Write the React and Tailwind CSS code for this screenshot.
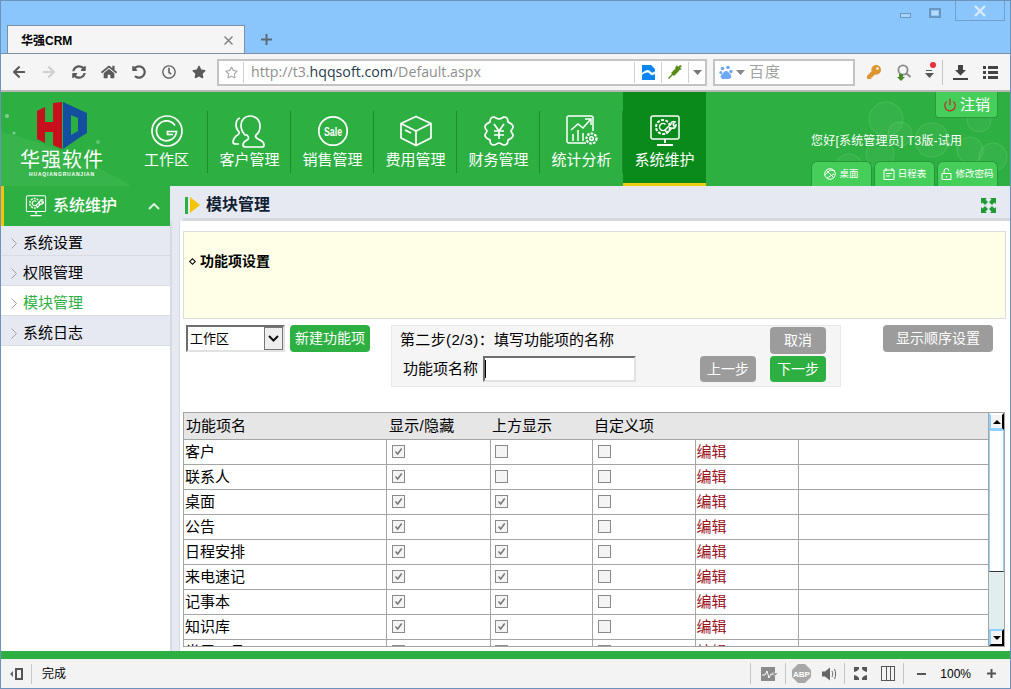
import React from "react";
import {
  FaArrowLeft, FaArrowRight, FaSyncAlt, FaHome, FaUndoAlt, FaRegClock, FaStar, FaRegStar, FaKey,
} from "react-icons/fa";
import { Power } from "lucide-react";

const cjk = { fontFamily: '"Liberation Sans","Noto Sans CJK SC",sans-serif' };

const Caret = ({ color = "#555" }) => (
  <svg width="9" height="5" viewBox="0 0 9 5"><path d="M0 0h9L4.500 5z" fill={color} /></svg>
);

const IconG = () => (
  <svg width="36" height="32" viewBox="0 0 36 32" fill="none" stroke="#fff" strokeWidth="1.700">
    <circle cx="18" cy="16" r="15" />
    <path d="M26 10.500a10 10 0 1 0 1.500 6H18.500v3h5.500" />
  </svg>
);
const IconUser = () => (
  <svg width="36" height="34" viewBox="0 0 36 34" fill="none" stroke="#fff" strokeWidth="1.700" strokeLinejoin="round">
    <path d="M13 21c-3-3-4-6-4-10 0-5 4-9 9-9 0 0 10 0 10 10 0 4-1 7-4 9-1 2 0 3 2 4 4 2 6 3 6 6 0 1-1 2-2 2H14c-2 0-3-1-3-2 0-3 2-4 4-5 2-1 2-3 0-5z" />
    <path d="M8 4C5 5 4 8 4 11c0 3 1 5 3 7 1 2-1 3-3 4-2 2-3 4-3 6 0 1 1 2 3 2h3" />
  </svg>
);
const IconSale = () => (
  <svg width="32" height="32" viewBox="0 0 32 32" fill="none">
    <circle cx="16" cy="16" r="14.200" stroke="#fff" strokeWidth="1.700" />
    <text x="16" y="20.500" textAnchor="middle" fontSize="12" fontWeight="700" fill="#fff" fontFamily="Liberation Sans Narrow, Liberation Sans, sans-serif" textLength="18" lengthAdjust="spacingAndGlyphs">Sale</text>
  </svg>
);
const IconBox = () => (
  <svg width="32" height="32" viewBox="0 0 32 32" fill="none" stroke="#fff" strokeWidth="1.700" strokeLinejoin="round">
    <path d="M16 1.500 31 8.500V23L16 30.500 1 23V8.500z" />
    <path d="M1 8.500 16 16l15-7.500M16 16v14.500M5 15l6 3" />
  </svg>
);
const IconYen = () => (
  <svg width="32" height="32" viewBox="0 0 32 32" fill="none" stroke="#fff" strokeWidth="1.700" strokeLinejoin="round">
    <path d="M11 2c2 1 3 2 5 2s3-1 5-2c3 0 4 2 4 5 2 1 5 2 5 5 0 2-2 3-2 4s2 3 2 4c0 3-3 4-5 5 0 3-1 5-4 5-2 0-3-2-5-2s-3 2-5 2c-3 0-4-2-4-5-2-1-5-2-5-5 0-1 2-3 2-4s-2-2-2-4c0-3 3-4 5-5 0-3 1-5 4-5z" />
    <path d="m11 9 5 7 5-7M11 16h10M11 20h10M16 16v8" />
  </svg>
);
const IconStat = () => (
  <svg width="32" height="32" viewBox="0 0 32 32" fill="none" stroke="#fff" strokeWidth="1.500">
    <path d="M20 28H3c-1 0-2-1-2-2V3c0-1 1-2 2-2h22c1 0 2 1 2 2v13" />
    <path d="m5 15 7-6 5 4 7-8M19 4h6v6" />
    <path d="M7 26v-7M12 26V15M17 26v-8" />
    <circle cx="25.500" cy="23.500" r="5" strokeDasharray="2.500 1.200" strokeWidth="2.200" /><circle cx="25.500" cy="23.500" r="1.800" />
  </svg>
);
const IconSys = ({ w = 32 }) => (
  <svg width={w} height={w} viewBox="0 0 32 32" fill="none" stroke="#fff" strokeWidth="1.500">
    <rect x="2" y="1" width="28" height="23" rx="2" />
    <path d="M16 24v4M8 30h16" strokeWidth="2" />
    <circle cx="14" cy="12" r="7" strokeDasharray="3 1.400" strokeWidth="2" />
    <path d="M16.500 9.500a3.500 3.500 0 1 0 0 5M16 15l6-6c0-2 2-3 4-2l-2 2 1 2 2-1c0 2-2 4-4 3l-5 5z" />
  </svg>
);

const NAV = [
  ["工作区", IconG],
  ["客户管理", IconUser],
  ["销售管理", IconSale],
  ["费用管理", IconBox],
  ["财务管理", IconYen],
  ["统计分析", IconStat],
];

const ROWS = [
  ["客户", false],
  ["联系人", false],
  ["桌面", true],
  ["公告", true],
  ["日程安排", true],
  ["来电速记", true],
  ["记事本", true],
  ["知识库", true],
  ["常用工具", true],
];

const Check = ({ on }) => (
  <span className="block w-[13px] h-[13px] border border-[#8a8a8a] bg-[#f4f4f4]">
    {on && (
      <svg width="11" height="11" viewBox="0 0 11 11" fill="none" stroke="#777" strokeWidth="1.500" className="block">
        <path d="m2.500 5.500 2.200 2.500 4-5.500" />
      </svg>
    )}
  </span>
);

const GrayBtn = ({ children, cls }) => (
  <div className={`flex items-center justify-center rounded-[4px] bg-[#9c9c9c] text-white text-[14px] ${cls}`}>{children}</div>
);

const Divider = () => <span className="block w-px h-[21px] bg-[#c5c5c5]" />;

function Chrome() {
  return (
    <>
      <div className="h-[52px] bg-[#8ac6fb] flex shrink-0 relative">
        <div className="mt-[24px] ml-[6px] w-[238px] h-[28px] bg-[#f5f5f5] border-t border-x border-[#7d90a3] flex items-center pl-[13px] pr-[11px] pt-[2px] text-[12px] font-bold text-black">
          <span className="flex-1">华强CRM</span>
          <svg width="9" height="9" viewBox="0 0 9 9" stroke="#777" strokeWidth="1.200"><path d="m.5.5 8 8m0-8-8 8" /></svg>
        </div>
        <svg width="11" height="11" viewBox="0 0 11 11" stroke="#5d6b78" strokeWidth="2" className="mt-[33px] ml-[16px]"><path d="M5.500 0v11M0 5.500h11" /></svg>
        <div className="ml-auto flex items-start pr-[5px]">
          <span className="mt-[12px] w-[11px] h-[5px] border border-[#6a97bf] bg-[#a8d4fb]" />
          <span className="mt-[7px] ml-[18px] w-[12px] h-[10px] border-2 border-[#6a97bf] flex items-center justify-center"><span className="w-[6px] h-[4px] bg-[#b9dcfb]" /></span>
          <span className="ml-[14px] w-[50px] h-[20px] border border-t-0 border-[#6f9fca] flex items-center justify-center">
            <svg width="12" height="12" viewBox="0 0 12 12" stroke="#d7eafb" strokeWidth="2.400"><path d="m1 1 10 10m0-10L1 11" /></svg>
          </span>
        </div>
      </div>
      <div className="h-[39px] shrink-0 bg-[#f5f5f5] border-t border-[#7d90a3] border-b-2 border-b-[#b8b8b8] flex items-center">
        <div className="flex items-center text-[#5a5a5a] w-[216px] pl-[3px]">
          {[FaArrowLeft, FaArrowRight, FaSyncAlt, FaHome, FaUndoAlt, FaRegClock, FaStar].map((I, i) => (
            <span key={i} className={`w-[30px] flex justify-center ${i === 1 ? "text-[#cfcfcf]" : ""}`}><I size={i === 3 ? 16 : 14} /></span>
          ))}
        </div>
        <div className="w-[490px] h-[27px] bg-white border-2 border-[#c4c4c4] flex items-center text-[14.200px] text-[#8e8e8e]" style={{ fontFamily: '"Open Sans","Noto Sans CJK SC",sans-serif' }}>
          <span className="w-[25px] flex justify-center text-[#a5a5a5] border-r border-[#d0d0d0] h-[21px] items-center shrink-0"><FaRegStar size={13} /></span>
          <span className="ml-[7px] flex-1">http://t3.<span className="text-[#2a3b4d]">hqqsoft.com</span>/Default.aspx</span>
          <span className="w-[27px] h-[21px] border-l border-[#d0d0d0] flex items-center justify-center">
            <svg width="13" height="15" viewBox="0 0 13 15"><path d="M0 0h9l4 4v2c-2 2-3 2-5 0s-4-1-8 2zM0 10c4-3 6-3 8-1s3 1 5 0v6H0z" fill="#0b86f0" /></svg>
          </span>
          <span className="w-[27px] h-[21px] border-l border-[#d0d0d0] flex items-center justify-center">
            <svg width="14" height="14" viewBox="0 0 14 14" fill="#5a8a18"><path d="m0 13 4-4-1-1 5-5 3 3-5 5-1-1-4 4zM9 0l1 2 2-2 2 1-2 2 2 1-4 2-3-3z" /></svg>
          </span>
          <span className="w-[17px] h-[21px] border-l border-[#d0d0d0] flex items-center justify-center"><Caret color="#777" /></span>
        </div>
        <div className="ml-[6px] w-[142px] h-[27px] bg-white border-2 border-[#c4c4c4] flex items-center pl-[4px] text-[15px] text-[#a2a2a2] tracking-[1px]">
          <svg width="14" height="15" viewBox="0 0 14 15" fill="#6ea7f5"><circle cx="3.500" cy="3.500" r="1.800" /><circle cx="9" cy="2.500" r="1.800" /><circle cx="1.800" cy="7.500" r="1.500" /><circle cx="12" cy="6.500" r="1.700" /><path d="M7 6c2 0 3 2 5 4 1 3-1 4-3 4H5c-3 0-4-2-3-4 2-1 3-4 5-4z" /></svg>
          <span className="ml-[3px] mr-[4px] flex"><Caret color="#888" /></span>
          百度
        </div>
        <div className="flex items-center ml-[10px]">
          <span className="w-[17px] flex justify-center text-[#dd9530]"><FaKey size={14} /></span>
          <span className="ml-[13px] w-[17px] flex justify-center">
            <svg width="17" height="17" viewBox="0 0 17 17" fill="none"><circle cx="8" cy="6" r="4.600" stroke="#8a8a8a" strokeWidth="1.800" /><path d="m11.500 9.500 4 3.500" stroke="#8a8a8a" strokeWidth="2" /><path d="M4 10h4v3h2l-4 4-4-4h2z" fill="#4a8a2a" /></svg>
          </span>
          <span className="ml-[10px] w-[14px] relative flex flex-col items-center pt-[5px] h-[20px]">
            <span className="absolute right-0 top-0 w-[6px] h-[6px] rounded-full bg-[#e8303a]" />
            <span className="w-[6px] h-px bg-[#555] mb-[2px] mt-[3px]" />
            <Caret color="#555" />
          </span>
          <span className="ml-[6px] h-[25px] w-px bg-[#c5c5c5]" />
          <span className="ml-[10px] w-[15px] flex justify-center">
            <svg width="15" height="15" viewBox="0 0 15 15" fill="#444"><path d="M5 0h5v5h3l-5.500 5.500L2 5h3zM0 13h15v2H0z" /></svg>
          </span>
          <span className="ml-[15px] w-[15px]">
            <svg width="15" height="13" viewBox="0 0 15 13" fill="#444"><path d="M0 0h3v3H0zM5 0h10v3H5zM0 5h3v3H0zM5 5h10v3H5zM0 10h3v3H0zM5 10h10v3H5z" /></svg>
          </span>
        </div>
      </div>
    </>
  );
}

function Header() {
  return (
    <div className="h-[94px] shrink-0 bg-[#2db041] flex relative overflow-hidden">
      <svg width="1009" height="94" className="absolute left-0 top-0" fill="none">
        <path d="M0 40c40 8 90 30 130 54H0z" fill="#fff" fillOpacity="0.05" />
        <circle cx="6" cy="24" r="2" fill="#fff" fillOpacity="0.4" /><circle cx="13" cy="41" r="1.500" fill="#fff" fillOpacity="0.4" /><circle cx="97" cy="50" r="2" fill="#fff" fillOpacity="0.25" />
        <g stroke="#fff" strokeOpacity="0.12" fill="#fff" fillOpacity="0.04">
          <circle cx="885" cy="27" r="17" /><circle cx="931" cy="48" r="17" /><circle cx="899" cy="42" r="12" />
          <circle cx="848" cy="76" r="14" /><circle cx="879" cy="62" r="14" /><circle cx="969" cy="58" r="13" /><circle cx="992" cy="65" r="14" /><circle cx="978" cy="28" r="12" />
        </g>
      </svg>
      <div className="w-[124px] shrink-0 relative flex flex-col items-center pt-[10px] pr-[2px]">
        <svg width="50" height="47" viewBox="0 0 50 47">
          <path d="M0 9 8 5V20H16V1L25 0V47L16 43V30H8V41L0 37z" fill="#c6101c" />
          <path fillRule="evenodd" d="M26 0 50 11V31L42 36 41 27V16L34 13V33L41 29 42 36 26 47z" fill="#134f9e" />
        </svg>
        <div className="text-white text-[20px] leading-[22px] tracking-[1px] whitespace-nowrap">华强软件</div>
        <div className="text-white text-[5px] leading-[7px] tracking-[0.800px] font-bold whitespace-nowrap">HUAQIANGRUANJIAN</div>
      </div>
      {NAV.map(([label, Icon]) => (
        <div key={label} className="w-[83px] shrink-0 relative flex flex-col items-center pt-[21px] text-white text-[15px]">
          <div className="h-[36px] flex items-center justify-center"><Icon /></div>
          <div className="mt-[1px] leading-[20px]">{label}</div>
          <span className="absolute right-0 top-[19px] h-[62px] w-px bg-[#1f8a31]" />
        </div>
      ))}
      <div className="w-[83px] shrink-0 relative bg-[#0a8a1b] border-b-[3px] border-[#f0cb10] flex flex-col items-center pt-[21px] text-white text-[15px]">
        <div className="h-[36px] flex items-center justify-center"><IconSys /></div>
        <div className="mt-[1px] leading-[20px]">系统维护</div>
      </div>
      <div className="flex-1 relative flex flex-col items-end pr-[12px]">
        <div className="w-[63px] h-[26px] pt-[2px] bg-[#45cf5a] rounded-b-[4px] border-b border-x border-[#2a9a3c] flex items-center justify-center text-white text-[15px]">
          <Power size={14} color="#c8202a" strokeWidth={2} className="mr-[3px]" />注销
        </div>
        <div className="w-[187px] mt-[15px] text-white text-[12px] tracking-[0.200px] leading-[16px] whitespace-nowrap">您好[系统管理员] T3版-试用</div>
        <div className="mt-[12px] flex gap-[2px] w-[187px]">
          {[
            ["桌面", <svg key="a" width="12" height="12" viewBox="0 0 12 12" fill="none" stroke="#fff"><circle cx="6" cy="6" r="5.300" /><path d="m2 2 8 8M1 7l5-5 5 1M3 10l7-4" /></svg>],
            ["日程表", <svg key="b" width="12" height="12" viewBox="0 0 12 12" fill="none" stroke="#fff"><path d="M1 2h10v9.500H1zM3 0v3M9 0v3M3 5.500h6M3 8h4" /></svg>],
            ["修改密码", <svg key="c" width="11" height="12" viewBox="0 0 11 12" fill="none" stroke="#fff"><path d="M1 5.500h9v6H1zM3 5.500V3a2.500 2.500 0 0 1 5 0" /><path d="M5.500 8v1.500" /></svg>],
          ].map(([t, ic]) => (
            <div key={t} className="w-[61px] h-[26px] bg-[#45cf5a] border-x border-t border-[#22983a] rounded-t-[6px] flex items-center justify-center gap-[3px] text-white text-[9.500px] whitespace-nowrap">{ic}{t}</div>
          ))}
        </div>
      </div>
    </div>
  );
}

function Sidebar() {
  return (
    <div className="w-[169px] shrink-0 bg-white flex flex-col">
      <div className="h-[40px] bg-[#2db041] border-l-[3px] border-[#f5c400] flex items-center text-white pl-[21px] pr-[10px]">
        <IconSys w={22} />
        <span className="ml-[6px] text-[16px] font-medium flex-1">系统维护</span>
        <svg width="12" height="7" viewBox="0 0 12 7" fill="none" stroke="#d8f2dc" strokeWidth="2"><path d="m1 6 5-5 5 5" /></svg>
      </div>
      {["系统设置", "权限管理", "模块管理", "系统日志"].map((t) => {
        const on = t === "模块管理";
        return (
          <div key={t} className={`h-[30px] pt-[6px] flex items-center border-b border-[#d9dbe4] pl-[10px] text-[15px] ${on ? "bg-white text-[#2db041]" : "bg-[#e6e9f2] text-black"}`}>
            <svg width="6" height="11" viewBox="0 0 6 11" fill="none" stroke="#a0a0a0"><path d="m.5.5 5 5-5 5" /></svg>
            <span className="ml-[6px]">{t}</span>
          </div>
        );
      })}
    </div>
  );
}

function Grid() {
  return (
    <div className="mt-[25px] ml-[3px] mr-[5px] h-[235px] border border-[#a5a5a5] flex text-[15px] text-black overflow-hidden">
      <div className="flex-1 overflow-hidden">
        <table className="w-[805px] table-fixed border-collapse">
          <colgroup>
            <col className="w-[202px]" /><col className="w-[104px]" /><col className="w-[102px]" /><col className="w-[103px]" /><col className="w-[103px]" /><col />
          </colgroup>
          <thead>
            <tr className="h-[26px] bg-[#e6e6e6] text-left">
              <th className="font-normal pl-[2px]">功能项名</th>
              <th className="font-normal pl-[3px] tracking-[0.300px]">显示/隐藏</th>
              <th className="font-normal pl-[2px]">上方显示</th>
              <th className="font-normal pl-[2px]">自定义项</th>
              <th /><th />
            </tr>
          </thead>
          <tbody>
            {ROWS.map(([name, top]) => (
              <tr key={name} className="h-[25px]">
                <td className="border border-l-0 border-[#a5a5a5] pl-[1px] leading-none">{name}</td>
                <td className="border border-[#a5a5a5] pl-[5px]"><Check on /></td>
                <td className="border border-[#a5a5a5] pl-[4px]"><Check on={top} /></td>
                <td className="border border-[#a5a5a5] pl-[5px]"><Check /></td>
                <td className="border border-[#a5a5a5] pl-[1px] text-[#98101a] leading-none">编辑</td>
                <td className="border border-r-0 border-[#a5a5a5]" />
              </tr>
            ))}
          </tbody>
        </table>
      </div>
      <div className="w-[16px] shrink-0 flex flex-col bg-[#e0eeee] border-l border-[#a5a5a5]">
        <div className="h-[17px] bg-[#f4f4f4] border-2 border-[#8fd0ff] border-r-black border-t-white flex items-center justify-center"><svg width="8" height="4" viewBox="0 0 8 4"><path d="M0 4h8L4 0z" /></svg></div>
        <div className="h-[142px] bg-white border border-[#8fd0ff] border-b-[#333]" />
        <div className="flex-1" />
        <div className="h-[17px] bg-[#f4f4f4] border-2 border-[#8fd0ff] border-r-black border-b-black flex items-center justify-center"><svg width="8" height="4" viewBox="0 0 8 4"><path d="M0 0h8L4 4z" /></svg></div>
      </div>
    </div>
  );
}

function Content() {
  return (
    <div className="flex-1 flex flex-col min-w-0 bg-[#e6e9f2]">
      <div className="h-[32px] pt-[6px] shrink-0 flex items-center pl-[15px] pr-[14px]">
        <span className="w-[3px] h-[17px] bg-[#2db041]" />
        <svg width="10" height="16" viewBox="0 0 10 16" className="ml-[2px]"><path d="M0 0l10 8-10 8z" fill="#f5c400" /></svg>
        <span className="ml-[6px] text-[16px] font-bold text-[#111f33] flex-1">模块管理</span>
        <svg width="15" height="15" viewBox="0 0 15 15" fill="#1f9a35"><path d="M0 0h6L4.500 1.500 7 4 6 5 4 7 1.500 4.500 0 6zM15 0v6l-1.500-1.500L11 7 8 4l2.500-2.500L9 0zM0 15V9l1.500 1.500L4 8l3 3-2.500 2.500L6 15zM15 15H9l1.500-1.500L8 11l3-3 2.500 2.500L15 9z" /></svg>
      </div>
      <div className="h-[3px] shrink-0 bg-[#d5d7de] ml-[13px]" />
      <div className="flex-1 flex min-h-0">
        <div className="w-[9px] shrink-0 bg-[#e6e9f2] border-l-2 border-[#d8dae2]" />
        <div className="flex-1 min-w-0 bg-white border-l border-[#d8dae2] flex flex-col">
          <div className="mt-[10px] ml-[3px] mr-[4px] h-[88px] shrink-0 bg-[#ffffe8] border border-[#ddd] flex items-start pt-[19px] pl-[5px] text-[14px] leading-[20px] font-bold text-black">
            <span className="w-[5px] h-[5px] rotate-45 border border-black mr-[5px] ml-px mt-[8px]" />功能项设置
          </div>
          <div className="mt-[6px] ml-[6px] flex items-start text-[14px] text-black shrink-0">
            <div className="w-[99px] h-[27px] bg-white border-2 border-[#6e6e6e] border-r-[#e2e2e2] border-b-[#e2e2e2] flex items-center pl-[1px] text-[13px]">
              <span className="flex-1 pl-[1px]">工作区</span>
              <span className="w-[19px] h-[23px] bg-[#eee] border border-[#777] flex items-center justify-center">
                <svg width="11" height="7" viewBox="0 0 11 7" fill="none" stroke="#111" strokeWidth="2"><path d="m1 1 4.500 4.500L10 1" /></svg>
              </span>
            </div>
            <div className="ml-[5px] w-[80px] h-[27px] rounded-[4px] bg-[#2db041] text-white flex items-center justify-center">新建功能项</div>
            <div className="ml-[21px] w-[450px] h-[62px] bg-[#f5f5f5] border border-[#e8e8e8] flex flex-col text-[15px]">
              <div className="flex items-start h-[30px]">
                <span className="ml-[8px] mt-[4px] leading-[20px] flex-1"><span className="tracking-[0.350px]">第二步(2/3)：</span>填写功能项的名称</span>
                <GrayBtn cls="mt-[1px] mr-[14px] w-[56px] h-[27px]">取消</GrayBtn>
              </div>
              <div className="flex items-center h-[26px]">
                <span className="ml-[11px] leading-[20px]">功能项名称</span>
                <div className="ml-[5px] w-[153px] h-[26px] bg-white border-2 border-[#6e6e6e] border-r-[#e2e2e2] border-b-[#e2e2e2] flex items-center"><span className="w-px h-[18px] bg-black" /></div>
                <GrayBtn cls="ml-[64px] w-[56px] h-[26px]">上一步</GrayBtn>
                <div className="ml-[14px] w-[56px] h-[26px] rounded-[4px] bg-[#2db041] text-white text-[14px] flex items-center justify-center">下一步</div>
              </div>
            </div>
            <GrayBtn cls="ml-[42px] w-[110px] h-[27px]">显示顺序设置</GrayBtn>
          </div>
          <Grid />
          <div className="flex-1" />
        </div>
      </div>
    </div>
  );
}

function Status() {
  return (
    <div className="h-[29px] shrink-0 bg-[#f3f3f3] flex items-center text-[12px] text-black">
      <span className="ml-[9px] w-[13px] flex items-center">
        <svg width="13" height="12" viewBox="0 0 13 12"><path d="M0 6l3-3v6z" fill="#666" /><rect x="6" y="1" width="6" height="10" fill="none" stroke="#555" strokeWidth="2" /></svg>
      </span>
      <span className="ml-[8px] h-[20px] w-px bg-[#c8c8c8]" />
      <span className="ml-[10px] flex-1">完成</span>
      <Divider />
      <span className="ml-[10px] flex items-center">
        <svg width="17" height="14" viewBox="0 0 17 14" className="block"><rect width="14" height="14" fill="#8a8a8a" /><path d="M1 8h3l2-4 2 7 2-4h3" stroke="#fff" fill="none" /><path d="M11 6h6l-3 3z" fill="#8a8a8a" stroke="#f3f3f3" strokeWidth="0.500" /></svg>
      </span>
      <span className="ml-[7px]"><Divider /></span>
      <span className="ml-[6px]">
        <svg width="19" height="19" viewBox="0 0 19 19" className="block"><path d="M6 0h7l6 6v7l-6 6H6l-6-6V6z" fill="#a8a8a8" /><text x="9.500" y="12.500" textAnchor="middle" fontSize="8" fontWeight="700" fill="#fff" fontFamily="Liberation Sans">ABP</text></svg>
      </span>
      <span className="ml-[11px]">
        <svg width="16" height="14" viewBox="0 0 16 14" fill="none" className="block"><path d="M0 4.500h3L8 .500v13l-5-4H0z" fill="#666" /><path d="M10 4c1 2 1 4 0 6M12.500 2c1.500 3 1.500 7 0 10" stroke="#666" /></svg>
      </span>
      <span className="ml-[6px]"><Divider /></span>
      <span className="ml-[9px]">
        <svg width="13" height="13" viewBox="0 0 13 13" fill="#555" className="block"><path d="M0 0h5v2L3 4 0 5zM13 0v5l-3-1-2-2V0zM0 13V8l3 1 2 2v2zM13 13H8v-2l2-2 3-1z" /></svg>
      </span>
      <span className="ml-[14px] w-[14px] h-[15px] border border-[#555] flex justify-evenly"><span className="w-px bg-[#555]" /><span className="w-px bg-[#555]" /></span>
      <span className="ml-[8px]"><Divider /></span>
      <span className="ml-[13px] w-[9px] h-[2px] bg-[#555]" />
      <span className="ml-[14px] text-[12px]">100%</span>
      <svg width="9" height="9" viewBox="0 0 9 9" stroke="#555" strokeWidth="2" className="ml-[16px] mr-[14px]"><path d="M4.500 0v9M0 4.500h9" /></svg>
    </div>
  );
}

export default function App() {
  return (
    <div className="w-[1011px] h-[689px] overflow-hidden flex flex-col border border-[#6b93bb] bg-white" style={cjk}>
      <Chrome />
      <Header />
      <div className="flex-1 flex min-h-0">
        <Sidebar />
        <Content />
      </div>
      <div className="h-[8px] shrink-0 bg-[#2db041]" />
      <Status />
    </div>
  );
}
